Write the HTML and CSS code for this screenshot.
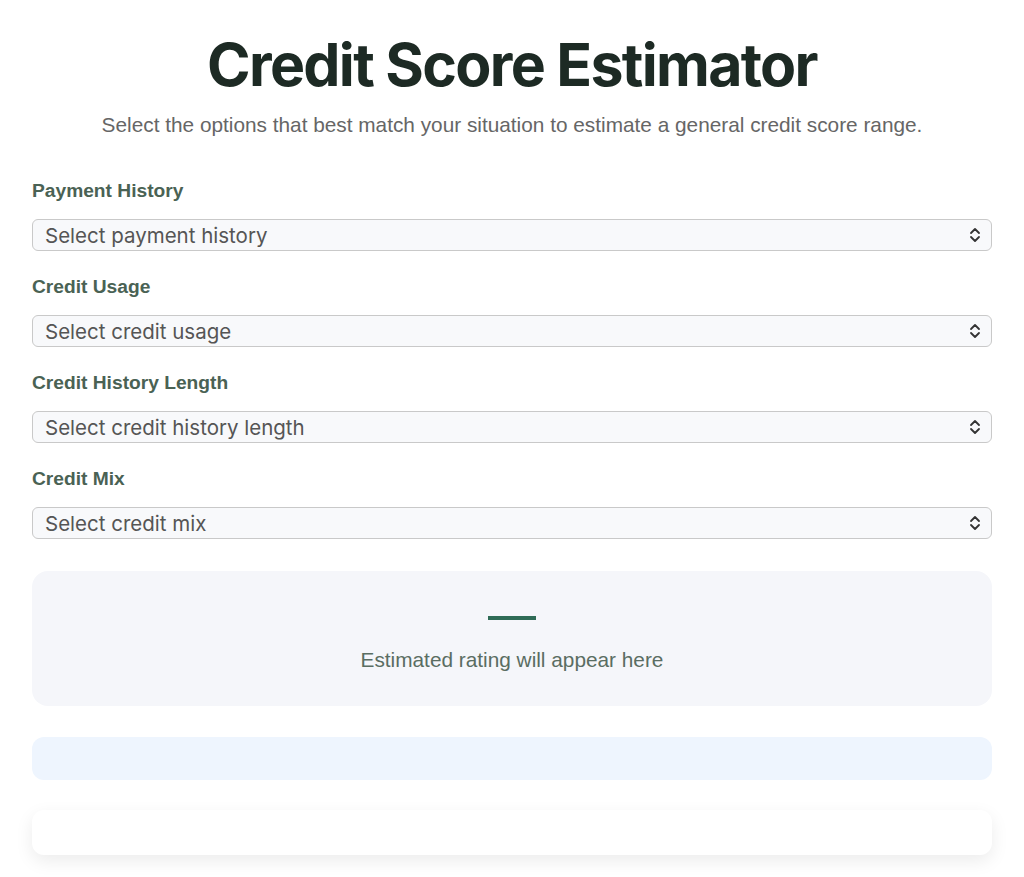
FILE: index.html
```html
<!DOCTYPE html>
<html lang="en">
<head>
    <meta charset="UTF-8">
    <meta name="viewport" content="width=device-width, initial-scale=1.0">
    <title>Credit Score Estimator</title>
    <link rel="stylesheet" href="styles.css">
</head>
<body>
    <main class="Estimador">
        <h1 class="Titulo">Credit Score Estimator</h1>
        <p class="Sub">Select the options that best match your situation to estimate a general credit score range.</p>

        <div class="Campo">
            <label class="Etiqueta" for="pago">Payment History</label>
            <select id="pago" class="Selector">
                <option>Select payment history</option>
            </select>
        </div>

        <div class="Campo">
            <label class="Etiqueta" for="uso">Credit Usage</label>
            <select id="uso" class="Selector">
                <option>Select credit usage</option>
            </select>
        </div>

        <div class="Campo">
            <label class="Etiqueta" for="largo">Credit History Length</label>
            <select id="largo" class="Selector">
                <option>Select credit history length</option>
            </select>
        </div>

        <div class="Campo">
            <label class="Etiqueta" for="mezcla">Credit Mix</label>
            <select id="mezcla" class="Selector">
                <option>Select credit mix</option>
            </select>
        </div>

        <div class="Resultado">
            <div class="Raya"></div>
            <p class="Mensaje">Estimated rating will appear here</p>
        </div>

        <div class="Nota"></div>
        <div class="Caja"></div>
    </main>
</body>
</html>
```

FILE: styles.css
```css
body {
    margin: 0;
    background: #fff;
    font-family: 'Liberation Sans', Arial, sans-serif;
}

.Estimador {
    width: 960px;
    margin: 0 auto;
    padding: 29px 0 40px;
}

.Titulo {
    margin: 0;
    text-align: center;
    font-family: Inter, sans-serif;
    font-size: 59px;
    font-weight: 700;
    letter-spacing: -1.7px;
    color: #1d2a24;
    line-height: 72px;
}

.Sub {
    margin: 12px 0 43px;
    text-align: center;
    font-size: 20.8px;
    line-height: 24px;
    color: #666;
}

.Campo {
    margin-bottom: 25px;
}

.Etiqueta {
    display: block;
    font-size: 19.2px;
    line-height: 22px;
    font-weight: 700;
    color: #4a6254;
    margin-bottom: 17px;
}

.Selector {
    display: block;
    width: 100%;
    height: 32px;
    padding: 0 40px 0 12px;
    font-family: Inter, sans-serif;
    font-size: 20.5px;
    color: #555;
    background: #f8f9fb url("data:image/svg+xml;utf8,<svg xmlns='http://www.w3.org/2000/svg' width='12' height='16' viewBox='0 0 12 16'><path d='M2 6 L6 2 L10 6 M2 10 L6 14 L10 10' fill='none' stroke='%23333' stroke-width='1.8' stroke-linecap='round' stroke-linejoin='round'/></svg>") no-repeat right 10px center;
    border: 1px solid #c9c9c9;
    border-radius: 6px;
    appearance: none;
    -webkit-appearance: none;
}

.Resultado {
    margin-top: 32px;
    height: 135px;
    background: #f5f6fa;
    border-radius: 16px;
    display: flex;
    flex-direction: column;
    align-items: center;
    padding-top: 45px;
    box-sizing: border-box;
}

.Raya {
    width: 48px;
    height: 4px;
    background: #2f6b56;
}

.Mensaje {
    margin: 28px 0 0;
    font-size: 20.8px;
    line-height: 24px;
    color: #5a6d62;
}

.Nota {
    margin-top: 31px;
    height: 43px;
    background: #eef5fe;
    border-radius: 12px;
}

.Caja {
    margin-top: 30px;
    height: 45px;
    background: #fff;
    border-radius: 12px;
    box-shadow: 0 6px 18px rgba(0, 0, 0, 0.08);
}
```
